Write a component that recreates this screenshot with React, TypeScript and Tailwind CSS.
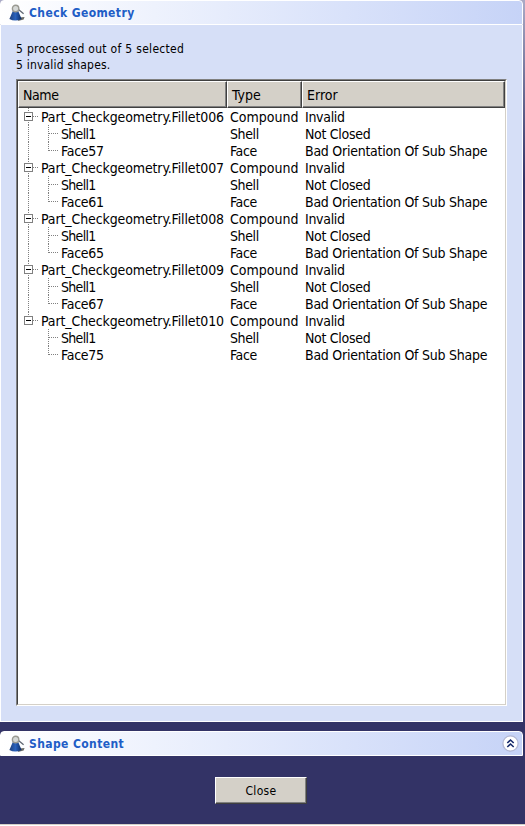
import React from "react";

const groups = [
  { name: "Fillet006", face: "Face57" },
  { name: "Fillet007", face: "Face61" },
  { name: "Fillet008", face: "Face65" },
  { name: "Fillet009", face: "Face67" },
  { name: "Fillet010", face: "Face75" },
];

function PartIcon() {
  return (
    <svg width="16" height="18" viewBox="0 0 16 18" className="shrink-0">
      <defs>
        <linearGradient id="cone" x1="0" x2="1">
          <stop offset="0" stopColor="#20407c" />
          <stop offset=".5" stopColor="#2a62bd" />
          <stop offset="1" stopColor="#0b2a63" />
        </linearGradient>
      </defs>
      <path d="M10 13.5 L15.6 13 L14.6 15.6 L9 17Z" fill="#6b6b66" />
      <path d="M4 6.5 L9 6.5 L12.6 15 Q6 18.2 0.4 15Z" fill="url(#cone)" />
      <path d="M9.5 5.5 L14.6 9.8" stroke="#5d6470" strokeWidth="1.2" />
      <circle cx="6.6" cy="4.5" r="3.2" fill="#d5d8d6" stroke="#9a9a92" strokeWidth="1.4" />
    </svg>
  );
}

function Title({ text, className, children }: { text: string; className: string; children?: React.ReactNode }) {
  return (
    <div className={`flex items-center rounded-t-[4px] border border-white bg-linear-to-r from-white to-[#c6d3f7] pl-2 pr-[3px] ${className}`}>
      <PartIcon />
      <span className="ml-1 text-[12px] font-bold tracking-[0.4px] whitespace-nowrap text-[#215dc6]">{text}</span>
      {children}
    </div>
  );
}

function HeaderCell({ text, className }: { text: string; className: string }) {
  return (
    <div className={`flex h-[27px] items-center border border-t-white border-l-white border-r-[#404040] border-b-[#404040] bg-[#d4d0c8] pt-[2px] pl-1 shadow-[inset_-1px_-1px_0_#808080] ${className}`}>
      {text}
    </div>
  );
}

function Row({ label, type, error, kind, last }: { label: string; type: string; error: string; kind: "root" | "mid" | "end"; last?: boolean }) {
  return (
    <div className="flex h-[17px] whitespace-nowrap leading-[19px]">
      <svg width={kind === "root" ? 23 : 43} height="17" className="shrink-0" stroke="#808080" strokeDasharray="1 1" shapeRendering="crispEdges" fill="none">
        {(kind === "root" || !last) && <path d={kind === "root" && last ? "M10.5 0V8" : "M10.5 0V17"} />}
        {kind === "root" ? (
          <>
            <path d="M15 8.5H20" />
            <rect x="6.5" y="4.5" width="8" height="8" fill="white" strokeDasharray="none" />
            <path d="M8 8.5H13" stroke="black" strokeDasharray="none" />
          </>
        ) : (
          <path d={kind === "mid" ? "M30.5 0V17M31 8.5H40" : "M30.5 0V9M31 8.5H40"} />
        )}
      </svg>
      <span className={kind === "root" ? "w-[189px] tracking-[-0.12px]" : kind === "mid" ? "w-[169px] tracking-[-0.7px]" : "w-[169px] tracking-[-0.25px]"}>{label}</span>
      <span className={kind === "root" ? "w-[75px] tracking-[0px]" : "w-[75px]"}>{type}</span>
      <span className={kind === "end" ? "tracking-[-0.25px]" : "tracking-[-0.3px]"}>{error}</span>
    </div>
  );
}

export default function App() {
  return (
    <div className="flex h-[826px] w-[525px] flex-col bg-[#333366] font-['DejaVu_Sans_Condensed','DejaVu_Sans',sans-serif] text-black">
      <div className="flex h-[824px] flex-col bg-linear-to-b from-[#aaaac6] to-[#333366] to-[180px]">
        <div className="flex h-[722px] w-[523px] flex-col">
          <Title text="Check Geometry" className="h-[25px]" />
          <div className="flex grow flex-col border-r border-b border-l border-white bg-[#d6dff7] pt-4 pl-[15px]">
            <p className="h-4 text-[12px] leading-4 tracking-[0.3px]">5 processed out of 5 selected</p>
            <p className="h-4 text-[12px] leading-4 tracking-[0.2px]">5 invalid shapes.</p>
            <div className="mt-[6px] h-[627px] w-[491px] border border-t-[#808080] border-r-white border-b-white border-l-[#808080]">
              <div className="h-full border border-t-[#404040] border-r-[#d4d0c8] border-b-[#d4d0c8] border-l-[#404040] bg-white text-[14px] tracking-[-0.4px]">
                <div className="flex">
                  <HeaderCell text="Name" className="w-[209px]" />
                  <HeaderCell text="Type" className="w-[75px] tracking-[0px]" />
                  <HeaderCell text="Error" className="grow tracking-[0px]" />
                </div>
                {groups.map((g, i) => (
                  <div key={g.name}>
                    <Row label={`Part_Checkgeometry.${g.name}`} type="Compound" error="Invalid" kind="root" last={i === 4} />
                    <Row label="Shell1" type="Shell" error="Not Closed" kind="mid" last={i === 4} />
                    <Row label={g.face} type="Face" error="Bad Orientation Of Sub Shape" kind="end" last={i === 4} />
                  </div>
                ))}
              </div>
            </div>
          </div>
        </div>
        <div className="flex grow flex-col bg-[#333366] pt-[9px]">
          <Title text="Shape Content" className="h-[25px] w-[523px]">
            <svg width="17" height="17" viewBox="0 0 17 17" className="ml-auto">
              <circle cx="8.5" cy="8.5" r="7.6" fill="white" stroke="#b3b8d4" strokeWidth="1.3" />
              <path d="M5.3 8L8.5 5L11.7 8M5.3 12L8.5 9L11.7 12" fill="none" stroke="#15296b" strokeWidth="1.6" />
            </svg>
          </Title>
          <button className="mt-[21px] ml-[215px] h-[27px] w-[92px] border border-t-white border-r-[#404040] border-b-[#404040] border-l-white bg-[#d4d0c8] pt-px text-[12px] tracking-[0.3px] shadow-[inset_-1px_-1px_0_#808080]">Close</button>
        </div>
      </div>
      <div className="h-px bg-[#d4d0c8]" />
      <div className="h-px bg-white" />
    </div>
  );
}
